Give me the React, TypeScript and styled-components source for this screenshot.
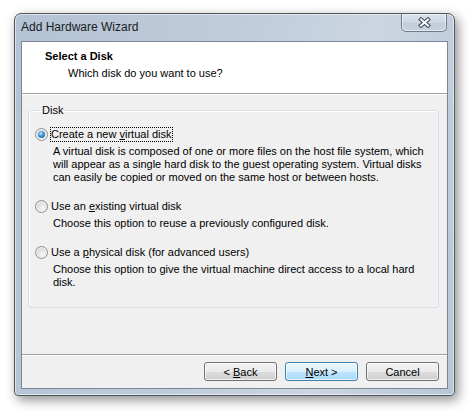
import styled, { createGlobalStyle } from 'styled-components';

const GlobalStyle = createGlobalStyle`
  html, body {
    margin: 0;
    padding: 0;
    background: #ffffff;
  }
  body {
    font-family: 'Liberation Sans', Tahoma, sans-serif;
    font-size: 11px;
    color: #000000;
  }
`;

const options = [
  {
    before: 'Create a new ',
    key: 'v',
    after: 'irtual disk',
    checked: true,
    desc: 'A virtual disk is composed of one or more files on the host file system, which will appear as a single hard disk to the guest operating system. Virtual disks can easily be copied or moved on the same host or between hosts.',
  },
  {
    before: 'Use an ',
    key: 'e',
    after: 'xisting virtual disk',
    checked: false,
    desc: 'Choose this option to reuse a previously configured disk.',
  },
  {
    before: 'Use a ',
    key: 'p',
    after: 'hysical disk (for advanced users)',
    checked: false,
    desc: 'Choose this option to give the virtual machine direct access to a local hard disk.',
  },
];

const App = () => {
  return (
    <>
      <GlobalStyle />
      <Page>
        <Window>
          <TitleBar>
            <Title>Add Hardware Wizard</Title>
            <CloseButton>
              <svg width='13' height='11' viewBox='0 0 13 11'>
                <path d='M3 2.5 L10 8.5 M10 2.5 L3 8.5' stroke='#3b4654' strokeWidth='4' strokeLinecap='square' />
                <path d='M3 2.5 L10 8.5 M10 2.5 L3 8.5' stroke='#ffffff' strokeWidth='2' strokeLinecap='square' />
              </svg>
            </CloseButton>
          </TitleBar>
          <Client>
            <Header>
              <HeaderTitle>Select a Disk</HeaderTitle>
              <HeaderSub>Which disk do you want to use?</HeaderSub>
            </Header>
            <Body>
              <Group>
                <Legend>Disk</Legend>
                <OptionList>
                  {options.map((o, i) => (
                    <Option key={i}>
                      <RadioRow>
                        <Radio $checked={o.checked} />
                        <RadioLabel $focused={o.checked}>
                          {o.before}
                          <u>{o.key}</u>
                          {o.after}
                        </RadioLabel>
                      </RadioRow>
                      <Description>{o.desc}</Description>
                    </Option>
                  ))}
                </OptionList>
              </Group>
            </Body>
            <Footer>
              <Button>
                <span>
                  &lt; <u>B</u>ack
                </span>
              </Button>
              <Button $primary>
                <span>
                  <u>N</u>ext &gt;
                </span>
              </Button>
              <Button>
                <span>Cancel</span>
              </Button>
            </Footer>
          </Client>
        </Window>
      </Page>
    </>
  );
};

export default App;

const Page = styled.div`
  width: 472px;
  height: 416px;
  padding: 13px 0 0 14px;
  box-sizing: border-box;
`;

const Window = styled.div`
  width: 441px;
  height: 383px;
  box-sizing: border-box;
  display: flex;
  flex-direction: column;
  padding: 0 6px 6px;
  border: 1px solid #50565e;
  border-radius: 7px 7px 4px 4px;
  background: linear-gradient(100deg, #b3c2d4 0%, #bfccdb 45%, #ccd6e2 72%, #b8c6d7 100%);
  box-shadow: 3px 4px 12px rgba(0, 0, 0, 0.45), inset 0 0 0 1px rgba(255, 255, 255, 0.55);
`;

const TitleBar = styled.div`
  height: 27px;
  display: flex;
  justify-content: space-between;
  align-items: flex-start;
`;

const Title = styled.div`
  align-self: center;
  padding-bottom: 2px;
  font-size: 12px;
  color: #1b1b1b;
`;

const CloseButton = styled.div`
  width: 46px;
  height: 19px;
  margin: -1px 1px 0 0;
  box-sizing: border-box;
  display: flex;
  align-items: center;
  justify-content: center;
  border: 1px solid #6f7b8a;
  border-top-color: #50565e;
  border-radius: 0 0 5px 5px;
  background: linear-gradient(180deg, #dce3ec 0%, #cdd6e1 50%, #c1ccd9 51%, #c8d2de 100%);
  box-shadow: inset 0 0 0 1px rgba(255, 255, 255, 0.5);
`;

const Client = styled.div`
  flex: 1;
  display: flex;
  flex-direction: column;
  border: 1px solid #7b8796;
  background: #f0f0f0;
`;

const Header = styled.div`
  height: 52px;
  box-sizing: border-box;
  padding: 7px 0 0 23px;
  background: #ffffff;
  border-bottom: 1px solid #a0a0a0;
`;

const HeaderTitle = styled.div`
  font-weight: bold;
  line-height: 15px;
`;

const HeaderSub = styled.div`
  margin: 2px 0 0 23px;
  line-height: 14px;
`;

const Body = styled.div`
  flex: 1;
  padding: 8px 8px 0 6px;
  border-top: 1px solid #ffffff;
`;

const Group = styled.fieldset`
  margin: 0;
  padding: 9px 10px 18px 6px;
  border: 1px solid #d5dfe5;
  border-radius: 3px;
  box-shadow: inset 1px 1px 0 #ffffff;
`;

const Legend = styled.legend`
  margin-left: 5px;
  padding: 0 2px;
  line-height: 14px;
`;

const OptionList = styled.div`
  display: flex;
  flex-direction: column;
  gap: 14px;
`;

const Option = styled.div`
  display: flex;
  flex-direction: column;
`;

const RadioRow = styled.div`
  height: 16px;
  display: flex;
  align-items: center;
`;

const Radio = styled.span<{ $checked?: boolean }>`
  width: 13px;
  height: 13px;
  box-sizing: border-box;
  flex-shrink: 0;
  position: relative;
  border-radius: 50%;
  border: 1px solid #8e8f8f;
  background: radial-gradient(circle at 60% 65%, #f8f8f8 0%, #dcdcdc 60%, #c9c9c9 100%);
  box-shadow: inset 0 0 0 1px #f4f4f4;

  &::after {
    content: '';
    display: ${(p) => (p.$checked ? 'block' : 'none')};
    position: absolute;
    left: 2px;
    top: 2px;
    width: 7px;
    height: 7px;
    border-radius: 50%;
    background: radial-gradient(circle at 40% 35%, #bfe6fb 0%, #3793d2 45%, #0e4f86 100%);
  }
`;

const RadioLabel = styled.span<{ $focused?: boolean }>`
  margin-left: 2px;
  height: 15px;
  line-height: 13px;
  box-sizing: border-box;
  padding-right: 1px;
  border: 1px dotted ${(p) => (p.$focused ? '#000000' : 'transparent')};
`;

const Description = styled.div`
  margin: 3px 0 0 18px;
  line-height: 13px;
`;

const Footer = styled.div`
  height: 34px;
  box-sizing: border-box;
  display: flex;
  justify-content: flex-end;
  gap: 8px;
  padding: 7px 8px 0 0;
  border-top: 1px solid #a0a0a0;
  box-shadow: inset 0 1px 0 #ffffff;
`;

const Button = styled.div<{ $primary?: boolean }>`
  width: 73px;
  height: 19px;
  box-sizing: border-box;
  display: flex;
  align-items: center;
  justify-content: center;
  border: 1px solid ${(p) => (p.$primary ? '#3c7fb1' : '#707070')};
  border-radius: 3px;
  background: ${(p) =>
    p.$primary
      ? 'linear-gradient(180deg, #eaf6fd 0%, #d9f0fc 50%, #bee6fd 51%, #a7d9f5 100%)'
      : 'linear-gradient(180deg, #f2f2f2 0%, #ebebeb 50%, #dddddd 51%, #cfcfcf 100%)'};
  box-shadow: inset 0 0 0 1px rgba(255, 255, 255, 0.7);
`;
